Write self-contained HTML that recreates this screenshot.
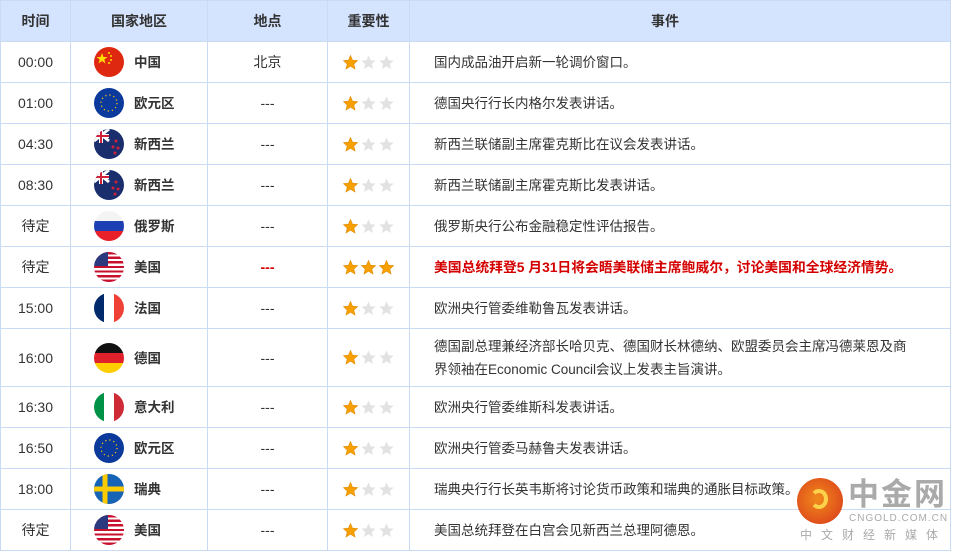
<!DOCTYPE html>
<html><head><meta charset="utf-8"><style>
body{margin:0;background:#fff;font-family:"Liberation Sans","Noto Sans CJK SC",sans-serif;color:#333;}
table{position:absolute;left:0;top:0;border-collapse:collapse;width:951px;table-layout:fixed;}
td,th{border:1px solid #c9daf5;font-size:14px;text-align:center;padding:0;height:40px;}
th{background:#d4e3fe;font-weight:bold;font-size:14px;color:#333;}
td.c{text-align:left;padding-left:23px;}
.cw{display:flex;align-items:center;}
.f{width:30px;height:30px;border-radius:50%;overflow:hidden;position:relative;margin-right:10px;flex:none;}
.n{font-weight:bold;font-size:13.5px;position:relative;top:-1px;}
td.e{text-align:left;padding-left:24px;padding-right:35px;line-height:23px;font-size:13.5px;}
td.s{text-align:left;padding-left:15px;}
td.s svg{display:block;}
.red{color:#d40000;font-weight:bold;}
td.e.red{font-size:13.8px;padding-right:0;}
</style></head><body>
<svg width="0" height="0" style="position:absolute"><defs><polygon id="st" points="7.5,0.5 9.6,5.2 14.6,5.6 10.8,9 12,14 7.5,11.3 3,14 4.2,9 0.4,5.6 5.4,5.2"/></defs></svg>
<table>
<colgroup><col style="width:70px"><col style="width:137px"><col style="width:120px"><col style="width:82px"><col></colgroup>
<tr><th>时间</th><th>国家地区</th><th>地点</th><th>重要性</th><th style="padding-right:30px">事件</th></tr>
<tr><td>00:00</td><td class="c"><div class="cw"><span class="f" style="background:#de2910"><svg width="30" height="30" style="position:absolute;left:0;top:0"><polygon points="8,6 9.5,10 13.5,10 10.3,12.5 11.5,16.5 8,14 4.5,16.5 5.7,12.5 2.5,10 6.5,10" fill="#ffde00"/><circle cx="15" cy="6" r="1" fill="#ffde00"/><circle cx="17" cy="9" r="1" fill="#ffde00"/><circle cx="17" cy="13" r="1" fill="#ffde00"/><circle cx="15" cy="16" r="1" fill="#ffde00"/></svg></span><span class="n">中国</span></div></td><td>北京</td><td class="s"><svg width="52" height="15"><use href="#st" fill="#f7a000" stroke="#e08a00" stroke-width=".6"/><use href="#st" x="18" fill="#e2e2e2"/><use href="#st" x="36" fill="#e2e2e2"/></svg></td><td class="e">国内成品油开启新一轮调价窗口。</td></tr>
<tr><td>01:00</td><td class="c"><div class="cw"><span class="f" style="background:#0b3a9c"><svg width="30" height="30" style="position:absolute;left:0;top:0"><circle cx="15" cy="15" r="8" fill="none" stroke="#ffcc00" stroke-width="1.2" stroke-dasharray="1.2 3"/></svg></span><span class="n">欧元区</span></div></td><td>---</td><td class="s"><svg width="52" height="15"><use href="#st" fill="#f7a000" stroke="#e08a00" stroke-width=".6"/><use href="#st" x="18" fill="#e2e2e2"/><use href="#st" x="36" fill="#e2e2e2"/></svg></td><td class="e">德国央行行长内格尔发表讲话。</td></tr>
<tr><td>04:30</td><td class="c"><div class="cw"><span class="f" style="background:#1a2e6e"><svg width="30" height="30" style="position:absolute;left:0;top:0"><path d="M0 0L15 12M15 0L0 12" stroke="#fff" stroke-width="3"/><path d="M7 0V14M0 7H15" stroke="#fff" stroke-width="4"/><path d="M7 0V14M0 7H15" stroke="#d0203a" stroke-width="2"/><circle cx="22" cy="12" r="1.5" fill="#d0203a"/><circle cx="19" cy="18" r="1.5" fill="#d0203a"/><circle cx="24" cy="19" r="1.5" fill="#d0203a"/><circle cx="21" cy="24" r="1.5" fill="#d0203a"/></svg></span><span class="n">新西兰</span></div></td><td>---</td><td class="s"><svg width="52" height="15"><use href="#st" fill="#f7a000" stroke="#e08a00" stroke-width=".6"/><use href="#st" x="18" fill="#e2e2e2"/><use href="#st" x="36" fill="#e2e2e2"/></svg></td><td class="e">新西兰联储副主席霍克斯比在议会发表讲话。</td></tr>
<tr><td>08:30</td><td class="c"><div class="cw"><span class="f" style="background:#1a2e6e"><svg width="30" height="30" style="position:absolute;left:0;top:0"><path d="M0 0L15 12M15 0L0 12" stroke="#fff" stroke-width="3"/><path d="M7 0V14M0 7H15" stroke="#fff" stroke-width="4"/><path d="M7 0V14M0 7H15" stroke="#d0203a" stroke-width="2"/><circle cx="22" cy="12" r="1.5" fill="#d0203a"/><circle cx="19" cy="18" r="1.5" fill="#d0203a"/><circle cx="24" cy="19" r="1.5" fill="#d0203a"/><circle cx="21" cy="24" r="1.5" fill="#d0203a"/></svg></span><span class="n">新西兰</span></div></td><td>---</td><td class="s"><svg width="52" height="15"><use href="#st" fill="#f7a000" stroke="#e08a00" stroke-width=".6"/><use href="#st" x="18" fill="#e2e2e2"/><use href="#st" x="36" fill="#e2e2e2"/></svg></td><td class="e">新西兰联储副主席霍克斯比发表讲话。</td></tr>
<tr><td>待定</td><td class="c"><div class="cw"><span class="f" style="background:linear-gradient(#f4f4f4 33%,#1c3fb4 33%,#1c3fb4 66%,#e8202a 66%)"></span><span class="n">俄罗斯</span></div></td><td>---</td><td class="s"><svg width="52" height="15"><use href="#st" fill="#f7a000" stroke="#e08a00" stroke-width=".6"/><use href="#st" x="18" fill="#e2e2e2"/><use href="#st" x="36" fill="#e2e2e2"/></svg></td><td class="e">俄罗斯央行公布金融稳定性评估报告。</td></tr>
<tr><td>待定</td><td class="c"><div class="cw"><span class="f" style="background:repeating-linear-gradient(#c8102e 0 2.3px,#fff 2.3px 4.6px)"><span style="position:absolute;left:0;top:0;width:14px;height:14px;background:#2b3a7e"></span></span><span class="n">美国</span></div></td><td class="red">---</td><td class="s"><svg width="52" height="15"><use href="#st" fill="#f7a000" stroke="#e08a00" stroke-width=".6"/><use href="#st" x="18" fill="#f7a000" stroke="#e08a00" stroke-width=".6"/><use href="#st" x="36" fill="#f7a000" stroke="#e08a00" stroke-width=".6"/></svg></td><td class="e red">美国总统拜登5 月31日将会晤美联储主席鲍威尔，讨论美国和全球经济情势。</td></tr>
<tr><td>15:00</td><td class="c"><div class="cw"><span class="f" style="background:linear-gradient(90deg,#002a6c 33%,#fff 33%,#fff 66%,#ef4135 66%)"></span><span class="n">法国</span></div></td><td>---</td><td class="s"><svg width="52" height="15"><use href="#st" fill="#f7a000" stroke="#e08a00" stroke-width=".6"/><use href="#st" x="18" fill="#e2e2e2"/><use href="#st" x="36" fill="#e2e2e2"/></svg></td><td class="e">欧洲央行管委维勒鲁瓦发表讲话。</td></tr>
<tr><td style="height:57px">16:00</td><td class="c"><div class="cw"><span class="f" style="background:linear-gradient(#111 33%,#e0202a 33%,#e0202a 66%,#ffce00 66%)"></span><span class="n">德国</span></div></td><td>---</td><td class="s"><svg width="52" height="15"><use href="#st" fill="#f7a000" stroke="#e08a00" stroke-width=".6"/><use href="#st" x="18" fill="#e2e2e2"/><use href="#st" x="36" fill="#e2e2e2"/></svg></td><td class="e">德国副总理兼经济部长哈贝克、德国财长林德纳、欧盟委员会主席冯德莱恩及商界领袖在Economic Council会议上发表主旨演讲。</td></tr>
<tr><td>16:30</td><td class="c"><div class="cw"><span class="f" style="background:linear-gradient(90deg,#009246 33%,#fff 33%,#fff 66%,#ce2b37 66%)"></span><span class="n">意大利</span></div></td><td>---</td><td class="s"><svg width="52" height="15"><use href="#st" fill="#f7a000" stroke="#e08a00" stroke-width=".6"/><use href="#st" x="18" fill="#e2e2e2"/><use href="#st" x="36" fill="#e2e2e2"/></svg></td><td class="e">欧洲央行管委维斯科发表讲话。</td></tr>
<tr><td>16:50</td><td class="c"><div class="cw"><span class="f" style="background:#0b3a9c"><svg width="30" height="30" style="position:absolute;left:0;top:0"><circle cx="15" cy="15" r="8" fill="none" stroke="#ffcc00" stroke-width="1.2" stroke-dasharray="1.2 3"/></svg></span><span class="n">欧元区</span></div></td><td>---</td><td class="s"><svg width="52" height="15"><use href="#st" fill="#f7a000" stroke="#e08a00" stroke-width=".6"/><use href="#st" x="18" fill="#e2e2e2"/><use href="#st" x="36" fill="#e2e2e2"/></svg></td><td class="e">欧洲央行管委马赫鲁夫发表讲话。</td></tr>
<tr><td>18:00</td><td class="c"><div class="cw"><span class="f" style="background:#1763b5"><svg width="30" height="30" style="position:absolute;left:0;top:0"><path d="M0 15H30M11 0V30" stroke="#fecb00" stroke-width="5"/></svg></span><span class="n">瑞典</span></div></td><td>---</td><td class="s"><svg width="52" height="15"><use href="#st" fill="#f7a000" stroke="#e08a00" stroke-width=".6"/><use href="#st" x="18" fill="#e2e2e2"/><use href="#st" x="36" fill="#e2e2e2"/></svg></td><td class="e">瑞典央行行长英韦斯将讨论货币政策和瑞典的通胀目标政策。</td></tr>
<tr><td>待定</td><td class="c"><div class="cw"><span class="f" style="background:repeating-linear-gradient(#c8102e 0 2.3px,#fff 2.3px 4.6px)"><span style="position:absolute;left:0;top:0;width:14px;height:14px;background:#2b3a7e"></span></span><span class="n">美国</span></div></td><td>---</td><td class="s"><svg width="52" height="15"><use href="#st" fill="#f7a000" stroke="#e08a00" stroke-width=".6"/><use href="#st" x="18" fill="#e2e2e2"/><use href="#st" x="36" fill="#e2e2e2"/></svg></td><td class="e">美国总统拜登在白宫会见新西兰总理阿德恩。</td></tr>
</table>
<div style="position:absolute;left:797px;top:478px;width:46px;height:46px;border-radius:50%;background:radial-gradient(circle at 45% 45%,#f08a1c,#d8361a);"><div style="position:absolute;left:13px;top:11px;width:18px;height:20px;border-radius:50%;border:4px solid #fbd24a;border-left-color:transparent;box-sizing:border-box"></div></div>
<div style="position:absolute;left:848px;top:478px;font-size:31px;font-weight:bold;color:#aaa;letter-spacing:2px;line-height:34px">中金网</div>
<div style="position:absolute;left:849px;top:513px;font-size:10px;color:#aaa;letter-spacing:1px">CNGOLD.COM.CN</div>
<div style="position:absolute;left:800px;top:526px;font-size:12px;color:#aaa;letter-spacing:9px">中文财经新媒体</div>
</body></html>
